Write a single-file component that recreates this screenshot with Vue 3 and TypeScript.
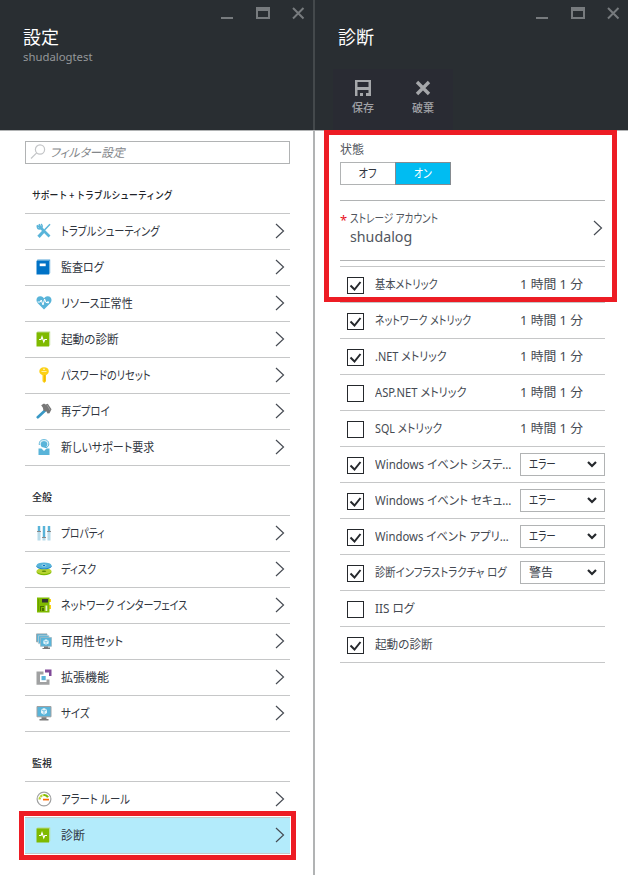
<script setup lang="ts">
import { ref } from 'vue'

interface MenuItem { icon: string; label: string; width: number; selected?: boolean }
interface MenuGroup { title: string; width: number; items: MenuItem[] }
interface Metric { label: string; width: number; checked: boolean; value?: string; level?: string; levelWidth?: number }

// Squeezes a label horizontally so that it takes the given width.
const vFit = {
  mounted(el: HTMLElement, binding: { value: number }) {
    el.style.transform = `scaleX(${binding.value / el.offsetWidth})`
  },
}

const groups: MenuGroup[] = [
  {
    title: 'サポート + トラブルシューティング', width: 141,
    items: [
      { icon: 'tools', label: 'トラブルシューティング', width: 98 },
      { icon: 'book', label: '監査ログ', width: 43 },
      { icon: 'heart', label: 'リソース正常性', width: 72 },
      { icon: 'pulse', label: '起動の診断', width: 58 },
      { icon: 'key', label: 'パスワードのリセット', width: 90 },
      { icon: 'hammer', label: '再デプロイ', width: 49 },
      { icon: 'person', label: '新しいサポート要求', width: 93 },
    ],
  },
  {
    title: '全般', width: 20,
    items: [
      { icon: 'sliders', label: 'プロパティ', width: 44 },
      { icon: 'disks', label: 'ディスク', width: 35 },
      { icon: 'board', label: 'ネットワーク インターフェイス', width: 126 },
      { icon: 'screens', label: '可用性セット', width: 62 },
      { icon: 'extension', label: '拡張機能', width: 48 },
      { icon: 'screen', label: 'サイズ', width: 29 },
    ],
  },
  {
    title: '監視', width: 20,
    items: [
      { icon: 'gauge', label: 'アラート ルール', width: 69 },
      { icon: 'pulse', label: '診断', width: 24, selected: true },
    ],
  },
]

const enabled = ref(true)
const interval = '1 時間 1 分'
const metrics = ref<Metric[]>([
  { label: '基本メトリック', width: 63, checked: true, value: interval },
  { label: 'ネットワーク メトリック', width: 96, checked: true, value: interval },
  { label: '.NET メトリック', width: 72, checked: true, value: interval },
  { label: 'ASP.NET メトリック', width: 92, checked: false, value: interval },
  { label: 'SQL メトリック', width: 67, checked: false, value: interval },
  { label: 'Windows イベント システ…', width: 136, checked: true, level: 'エラー', levelWidth: 27 },
  { label: 'Windows イベント セキュ…', width: 136, checked: true, level: 'エラー', levelWidth: 27 },
  { label: 'Windows イベント アプリ…', width: 134, checked: true, level: 'エラー', levelWidth: 27 },
  { label: '診断インフラストラクチャ ログ', width: 132, checked: true, level: '警告', levelWidth: 24 },
  { label: 'IIS ログ', width: 39, checked: false },
  { label: '起動の診断', width: 58, checked: true },
])
</script>

<template>
  <div class="portal">
    <section class="blade">
      <header class="head">
        <div class="controls">
          <svg width="84" height="13" viewBox="0 0 84 13"><path d="M0 11h12" /><path d="M36 1v10h12V1" /><path class="bar" d="M35 2h14" /><path d="M72 1l10.500 10.500M82.500 1L72 11.500" /></svg>
        </div>
        <h1 class="title"><span v-fit="36" class="fit">設定</span></h1>
        <p class="subtitle"><span v-fit="69" class="fit">shudalogtest</span></p>
      </header>
      <div class="body settings">
        <div class="filter">
          <svg width="16" height="16" viewBox="0 0 16 16"><circle cx="10" cy="5.500" r="4.600" /><path d="M6.700 8.800L1 14.500" /></svg>
          <span v-fit="75" class="fit placeholder">フィルター設定</span>
        </div>
        <div v-for="group in groups" :key="group.title" class="group">
          <h2 class="group-title"><span v-fit="group.width" class="fit">{{ group.title }}</span></h2>
          <ul class="menu">
            <li v-for="item in group.items" :key="item.label" class="item" :class="{ selected: item.selected }">
              <svg class="icon" width="16" height="16" viewBox="0 0 16 16">
                <g v-if="item.icon === 'tools'" fill="none" stroke="#59b4d9">
                  <path d="M14 1.300L8.500 7" stroke-width="1.500" /><path d="M7.500 8.500l-5 5.300" stroke-width="3.200" />
                  <path d="M4.500 4.500l9 9" stroke-width="2.700" /><path d="M1.300 2.300L4 4.800l.8-.7L3 1.200M1.300 2.300c-.5 3 1 4 3 3.500s2.700-3 .8-4.800" stroke-width="1.500" />
                </g>
                <g v-else-if="item.icon === 'book'">
                  <path fill="#59a5d8" d="M1.500.5h12.700V14l-1 1.500V2H.5z" /><path fill="#0072c6" d="M.5 2H13v13.500H.5z" /><path fill="#fff" d="M3.700 4.500h6v2.700h-6z" />
                </g>
                <g v-else-if="item.icon === 'heart'">
                  <path fill="#59b4d9" d="M8 14.500L1.500 8C-1 4.500 1.500 1 4.500 1.300 6.300 1.400 7.400 2.500 8 3.500c.6-1 1.700-2.100 3.500-2.200C14.500 1 17 4.500 14.500 8z" />
                  <path fill="none" stroke="#fff" stroke-width="1" d="M1.500 7h2.700l1-2 1.800 5 1.600-6L10 7.500h1.800" /><circle cx="12" cy="7.300" r="1.100" fill="#fff" />
                </g>
                <g v-else-if="item.icon === 'pulse'">
                  <path fill="#b8d988" d="M1.500.5h12.700V14l-1 1.500V2H.5z" /><path fill="#7fba00" d="M.5 1.500H13v14H.5z" />
                  <path fill="none" stroke="#fff" stroke-width="1.100" d="M3 8.500h2l1-2.800L7.800 11l1-2.500H11" />
                </g>
                <g v-else-if="item.icon === 'key'">
                  <path fill="#fcd116" d="M8 .3c3 0 4.800 1.500 4.800 4S10.500 8 10 8.300v6L8.200 16 6.500 14.300v-6C5 7.500 3.300 6.600 3.300 4.300S5 .3 8 .3z" /><path stroke="#fff0a0" d="M5.500 4.500h5" /><path stroke="#f0b000" d="M8.700 8v6.500" /><circle cx="8" cy="2.200" r=".8" fill="#fff" />
                </g>
                <g v-else-if="item.icon === 'hammer'">
                  <path stroke="#3999c6" stroke-width="2.700" stroke-linecap="round" d="M1.800 14.200l7-6.500" /><path fill="#777" d="M5.200 2.200L8 .5l1.500 1L11.800.7l3.700 5.500-2 4-2 .3-1-2-3-.8-.6-3z" /><path stroke="#999" d="M11 2l3 5" />
                </g>
                <g v-else-if="item.icon === 'person'">
                  <path fill="#59b4d9" d="M2.500 9.500h3L8 12l2.500-2.500h3V16h-11z" /><circle cx="8" cy="5.300" r="3.300" fill="#59b4d9" /><path fill="none" stroke="#59b4d9" d="M3.300 6C3 2 5 .7 8 .7s5 1.500 4.700 5.300L11 8.500H8.500" /><path fill="none" stroke="#c5e7f4" stroke-width=".8" d="M4.400 5C4.500 2.500 6 1.600 8 1.600s3.500 1 3.600 3.400" />
                </g>
                <g v-else-if="item.icon === 'sliders'">
                  <path fill="#b8dcea" d="M1.500 1h3v14.500h-3zM6.500 1h3v14.500h-3zM11.500 1h3v14.500h-3z" /><path fill="#59b4d9" d="M2 1h2v5H2zM7 1h2v11H7zM12 1h2v5h-2z" /><path stroke="#8a8a8a" d="M1 6.500h4M6 12.500h4M11 6.500h4" />
                </g>
                <g v-else-if="item.icon === 'disks'">
                  <ellipse cx="8" cy="11" rx="7.500" ry="3.300" fill="#7fba00" /><ellipse cx="8" cy="10" rx="7.500" ry="3" fill="#b8d432" /><ellipse cx="8" cy="10.300" rx="2.300" ry=".8" fill="#5c8a00" />
                  <ellipse cx="8" cy="5.300" rx="7.500" ry="3" fill="#1e83c9" /><ellipse cx="8" cy="4.400" rx="7.500" ry="3" fill="#59b4d9" /><ellipse cx="8" cy="4.500" rx="2.500" ry=".9" fill="#b8e0f0" /><path stroke="#0072c6" d="M6.800 4.500h2.400" />
                </g>
                <g v-else-if="item.icon === 'board'">
                  <path fill="#fcd116" d="M13 2h2v3h-2zM13 8h2v4h-2z" /><path fill="#7fba00" d="M1 .5h12.500v15H1z" /><path fill="#333" d="M6 2h6v3.500H6z" /><path fill="#4c6f00" d="M4 9h4v1H5v4H4zM6 11h2v3H6z" /><path fill="#e8f2d0" d="M9.500 8.500h1.800v5.500H9.500z" /><path stroke="#6ba000" d="M2.500 2v12" />
                </g>
                <g v-else-if="item.icon === 'screens'">
                  <path fill="#59b4d9" stroke="#a0a1a2" stroke-width=".8" d="M.5.900h10.500v8H.5z" /><path fill="#59b4d9" stroke="#b8cdd6" stroke-width=".8" d="M2.500 2.700h10.500v8H2.500z" /><path fill="#59b4d9" stroke="#a0b8c2" stroke-width=".8" d="M4.500 4.500h11v8.800h-11z" /><path fill="#7a7a7a" d="M8 13.500h4v1h2V16H6.500v-1H8z" /><path fill="#e4f4fa" d="M10 6.200l2.700 1.200v3L10 11.700l-2.700-1.300v-3z" /><path fill="none" stroke="#59b4d9" stroke-width=".6" d="M7.500 7.600L10 8.700l2.500-1.100M10 8.700v2.700" />
                </g>
                <g v-else-if="item.icon === 'extension'">
                  <path fill="#a0a1a2" d="M.5 2.500H7.500v3H4v7.500h6.500v-2.500h3v5.200H.5z" /><path fill="#804998" d="M9 .5h6.500v6.500H13V3.500H9z" /><path fill="#59b4d9" d="M5.500 7h4.200v4.200H5.500z" />
                </g>
                <g v-else-if="item.icon === 'screen'">
                  <path fill="#59b4d9" stroke="#a0a1a2" d="M1 1.500h14v10.300H1z" /><path fill="#7a7a7a" d="M5.500 12.300h5V14h2v1.500h-9V14h2z" /><path fill="#e4f4fa" d="M8 3l3 1.400v3.700L8 9.700 5 8.100V4.400z" /><path fill="none" stroke="#59b4d9" stroke-width=".8" d="M5.300 4.700L8 6l2.700-1.300M8 6v3.300" />
                </g>
                <g v-else>
                  <circle cx="8" cy="8" r="6.900" fill="#fff" stroke="#a0a1a2" stroke-width="1.200" /><path fill="none" stroke="#b8d432" stroke-width="2.200" stroke-dasharray="2.200 .5" d="M3.600 8.500A4.500 4.500 0 0 1 8 4" /><path fill="none" stroke="#7fba00" stroke-width="2.200" d="M8 4a4.500 4.500 0 0 1 4 2.200" /><path fill="none" stroke="#ff6a00" stroke-width="1.700" d="M7 8.600h6" />
                </g>
              </svg>
              <span v-fit="item.width" class="fit">{{ item.label }}</span>
              <svg class="chevron" width="10" height="16" viewBox="0 0 10 16"><path d="M1 1l7.500 7L1 15" /></svg>
            </li>
          </ul>
        </div>
      </div>
    </section>

    <section class="blade second">
      <header class="head">
        <div class="controls">
          <svg width="84" height="13" viewBox="0 0 84 13"><path d="M0 11h12" /><path d="M36 1v10h12V1" /><path class="bar" d="M35 2h14" /><path d="M72 1l10.500 10.500M82.500 1L72 11.500" /></svg>
        </div>
        <h1 class="title"><span v-fit="36" class="fit">診断</span></h1>
        <div class="toolbar">
          <button class="tool">
            <svg width="16" height="16" viewBox="0 0 16 16"><path fill="#a5a7aa" fill-rule="evenodd" d="M0 0h16v16h-2.500v-6h-11v6H0zM2.500 2v5h11V2z" /><path fill="#a5a7aa" d="M5 13h3v3H5zM11 13h3v3h-3z" /></svg>
            <span v-fit="22" class="fit">保存</span>
          </button>
          <button class="tool">
            <svg width="16" height="16" viewBox="0 0 16 16"><path stroke="#a5a7aa" stroke-width="3.400" d="M2 2l12 12M14 2L2 14" /></svg>
            <span v-fit="22" class="fit">破棄</span>
          </button>
        </div>
      </header>
      <div class="body diagnostics">
        <div class="status-label"><span v-fit="24" class="fit">状態</span></div>
        <div class="toggle">
          <button :class="{ on: !enabled }" @click="enabled = false"><span v-fit="18" class="fit mid">オフ</span></button>
          <button :class="{ on: enabled }" @click="enabled = true"><span v-fit="18" class="fit mid">オン</span></button>
        </div>
        <div class="storage">
          <span class="required">*</span>
          <div class="storage-text">
            <div class="storage-label"><span v-fit="88" class="fit">ストレージ アカウント</span></div>
            <div class="storage-name"><span v-fit="62" class="fit">shudalog</span></div>
          </div>
          <svg class="chevron" width="10" height="16" viewBox="0 0 10 16"><path d="M1 1l7.500 7L1 15" /></svg>
        </div>
        <ul class="metrics">
          <li v-for="metric in metrics" :key="metric.label" class="metric">
            <span class="check" @click="metric.checked = !metric.checked">
              <svg v-if="metric.checked" width="15" height="15" viewBox="0 0 15 15"><path d="M2.500 7.500l4 4 6-7.500" /></svg>
            </span>
            <span class="metric-label"><span v-fit="metric.width" class="fit">{{ metric.label }}</span></span>
            <span v-if="metric.value" v-fit="63" class="fit">{{ metric.value }}</span>
            <span v-else-if="metric.level" class="select">
              <span v-fit="metric.levelWidth ?? 24" class="fit">{{ metric.level }}</span>
              <svg width="10" height="7" viewBox="0 0 10 7"><path d="M1 1l4 4 4-4" /></svg>
            </span>
          </li>
        </ul>
        <div class="callout callout-storage"></div>
      </div>
    </section>
    <div class="callout callout-menu"></div>
  </div>
</template>

<style>
body { margin: 0; background: #fff; }
</style>

<style scoped>
.portal { position: relative; display: flex; width: 628px; height: 875px; font: 12px/18px "Noto Sans", "Noto Sans CJK JP", sans-serif; font-feature-settings: "palt"; color: #30353e; }
.portal * { box-sizing: border-box; }
.blade { width: 315px; border-right: 2px solid #b1b3b4; display: flex; flex-direction: column; }
.blade.second { width: 313px; border-right: 0; }
.head { height: 130px; background: #292e32; flex: none; display: flex; flex-direction: column; margin-right: -2px; border-right: 2px solid #44494c; }
.second .head { margin-right: 0; border-right: 0; }
.controls { height: 26px; padding: 7px 8px 0 0; display: flex; justify-content: flex-end; }
.controls path { fill: none; stroke: #777b7e; stroke-width: 2; }
.controls .bar { stroke-width: 4; }
.title { margin: 0; padding-left: 23px; font-size: 18px; line-height: 23px; font-weight: 400; color: #fff; height: 24px; }
.subtitle { margin: 0; padding-left: 23px; font-size: 11px; line-height: 13px; color: #94979a; }
.fit { display: inline-block; white-space: nowrap; transform-origin: left center; flex: none; }
.fit.mid { transform-origin: center; }
.toolbar { display: flex; width: 120px; height: 61px; margin: 19px 0 0 18px; background: #292b33; }
.tool { width: 60px; padding: 11px 0 0; border: 0; background: none; display: flex; flex-direction: column; align-items: center; gap: 3px; font: 500 11px/16px "Noto Sans CJK JP", sans-serif; color: #a0a2a6; }
.tool .fit { transform-origin: center; }
.body { border-top: 1px solid #b1b3b4; flex: 1; }
.settings { padding: 10px 23px 0 25px; }
.filter { height: 23px; border: 1px solid #b1b3b4; display: flex; align-items: center; padding-left: 4px; gap: 4px; }
.filter svg { fill: none; stroke: #c3c5c7; stroke-width: 1.200; margin-top: -1px; }
.placeholder { font-style: italic; color: #84878b; }
.group-title { margin: 0; height: 49px; padding: 23px 0 0 7px; font: 500 10px/16px "Noto Sans CJK JP", sans-serif; color: #202329; }
.menu, .metrics { list-style: none; margin: 0; padding: 0; }
.menu { border-bottom: 1px solid #c6c7c8; }
.item { height: 36px; border-top: 1px solid #c6c7c8; display: flex; align-items: center; padding: 0 5px 0 11px; }
.icon { margin: -1px 9px 0 0; flex: none; }
.item.selected { background: #b3ebfb; }
.chevron { margin: -1px 0 0 auto; flex: none; }
.chevron path { fill: none; stroke: #464b53; stroke-width: 1.200; }
.diagnostics { position: relative; padding: 9px 23px 0 25px; }
.status-label { height: 22px; line-height: 19px; color: #51565e; }
.toggle { display: flex; width: 111px; height: 23px; }
.toggle button { flex: 1; padding: 0; border: 1px solid #b1b3b4; background: #fff; font: inherit; line-height: 20px; color: #30353e; }
.toggle button:first-child { border-right: 0; }
.toggle button.on { background: #00bcf2; color: #fff; border-color: #858b90; }
.storage { margin-top: 15px; height: 61px; border: solid #b1b3b4; border-width: 1px 0; display: flex; align-items: center; padding-right: 2px; }
.storage .chevron { margin-top: -5px; }
.required { width: 10px; height: 44px; font-size: 13px; line-height: 22px; color: #e81123; }
.storage-text { height: 44px; padding-top: 1px; }
.storage-label { height: 17px; line-height: 17px; color: #51565e; }
.storage-name { font-size: 14px; line-height: 19px; color: #51565e; }
.metrics { margin-top: 5px; border-bottom: 1px solid #c6c7c8; }
.metric { height: 36px; border-top: 1px solid #c6c7c8; display: flex; align-items: center; padding-left: 7px; color: #454a52; }
.check { width: 17px; height: 17px; margin-top: 2px; border: 1px solid #25282c; flex: none; }
.check svg { display: block; fill: none; stroke: #25282c; stroke-width: 2; }
.metric-label { width: 156px; padding-left: 11px; flex: none; }
.select { width: 85px; height: 23px; border: 1px solid #b1b3b4; display: flex; align-items: center; justify-content: space-between; padding: 0 7px 0 8px; color: #30353e; }
.select svg { fill: none; stroke: #25282c; stroke-width: 2.200; }
.callout { position: absolute; border: 5px solid #ed1c24; pointer-events: none; }
.callout-storage { left: 9px; top: -1px; width: 293px; height: 172px; }
.callout-menu { left: 19px; top: 811px; width: 277px; height: 49px; }
</style>
